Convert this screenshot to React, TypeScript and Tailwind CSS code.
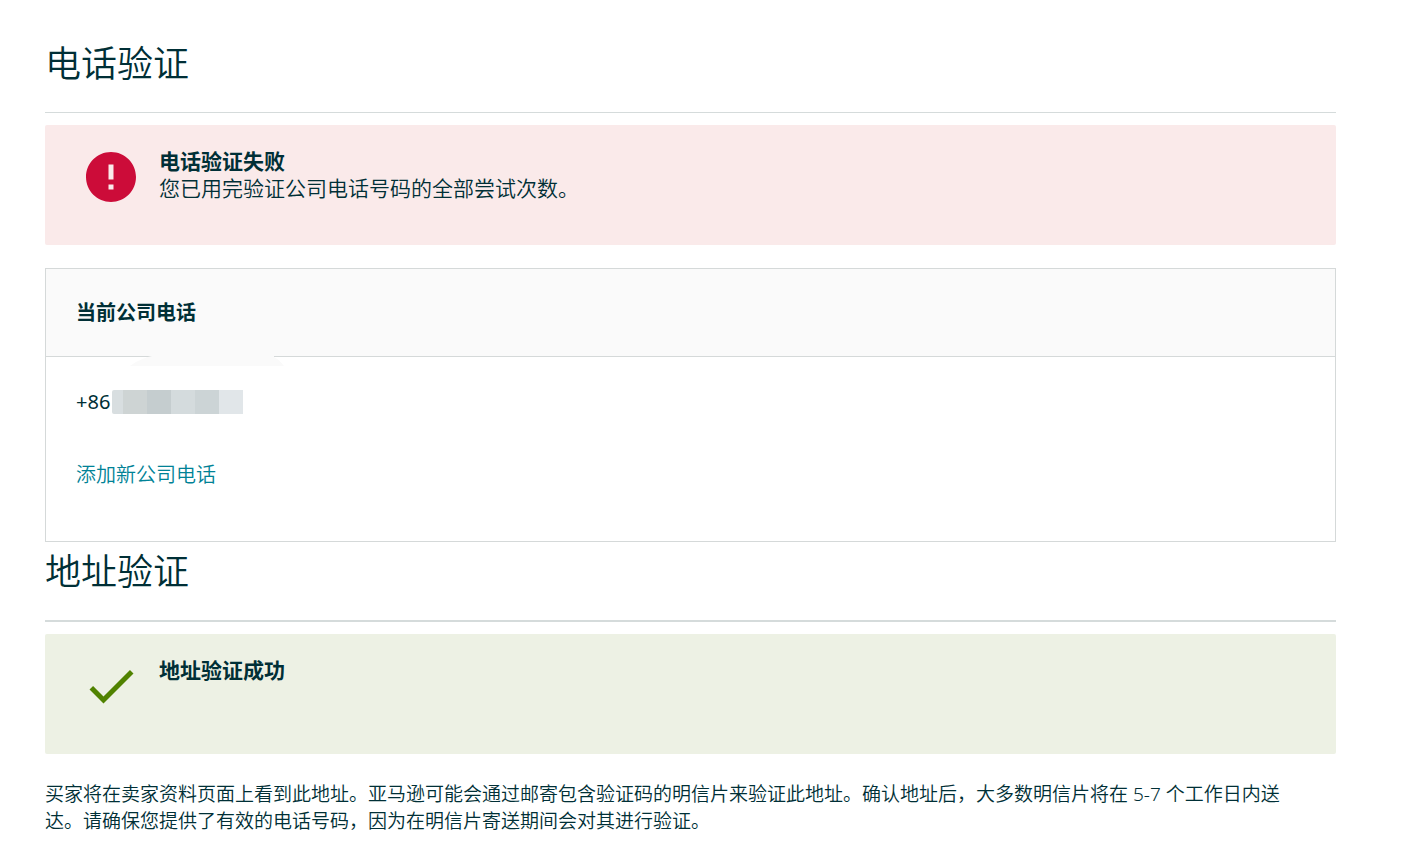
import type { ReactNode } from "react";

function SectionHeading({ children, ruleClass }: { children: ReactNode; ruleClass: string }) {
  return (
    <h1 className={`border-[#d5dbdb] pb-6 text-4xl leading-12 font-[350] ${ruleClass}`}>
      {children}
    </h1>
  );
}

function Banner({
  toneClass,
  icon,
  title,
  children,
}: {
  toneClass: string;
  icon: ReactNode;
  title: string;
  children?: ReactNode;
}) {
  return (
    <div className={`mt-3 flex min-h-30 gap-[23px] rounded-xs pt-[23px] pr-6 pb-6 pl-[41px] text-[21px] leading-[27px] ${toneClass}`}>
      <div className="shrink-0 pt-1">{icon}</div>
      <div>
        <h2 className="font-bold">{title}</h2>
        {children}
      </div>
    </div>
  );
}

function ErrorIcon() {
  return (
    <svg className="size-[50px] fill-[#cc0c39]" viewBox="2 2 20 20" aria-hidden="true">
      <path d="M12 2C6.48 2 2 6.48 2 12s4.48 10 10 10 10-4.48 10-10S17.52 2 12 2zm1 15h-2v-2h2v2zm0-4h-2V7h2v6z" />
    </svg>
  );
}

function CheckIcon() {
  return (
    <svg className="size-[50px] fill-[#508200]" viewBox="2 2 20 20" aria-hidden="true">
      <path d="M9 16.17L4.83 12l-1.42 1.41L9 19 21 7l-1.41-1.41z" />
    </svg>
  );
}

function MaskedDigits() {
  return (
    <span className="flex h-6 overflow-hidden rounded-l-xs" aria-hidden="true">
      <span className="w-[11px] bg-[#d8dee0]" />
      <span className="w-6 bg-[#ced4d4]" />
      <span className="w-6 bg-[#c5cdcf]" />
      <span className="w-6 bg-[#d4dbdd]" />
      <span className="w-6 bg-[#ccd4d6]" />
      <span className="w-6 bg-[#e1e6e9]" />
    </span>
  );
}

export default function App() {
  return (
    <main className="bg-white pt-10 pr-[69px] pb-6 pl-[45px] font-['Noto_Sans','Noto_Sans_CJK_SC',sans-serif] text-[#002f36]" lang="zh-CN">
      <section>
        <SectionHeading ruleClass="border-b">电话验证</SectionHeading>
        <Banner toneClass="bg-[#faeaea]" icon={<ErrorIcon />} title="电话验证失败">
          <p className="font-[350]">您已用完验证公司电话号码的全部尝试次数。</p>
        </Banner>

        <div className="mt-[23px] border border-[#d5d9d9] text-xl leading-[27px]">
          <div className="border-b border-[#d5d9d9] bg-[#fafafa] px-[30px] py-[30px]">
            <h2 className="font-bold">当前公司电话</h2>
          </div>
          <div className="relative px-[30px] pt-[31px] pb-[53px]">
            <svg className="absolute -top-px left-[84px] h-[11px] w-[154px] fill-[#fafafa]" viewBox="0 0 154 11" aria-hidden="true">
              <path d="M0 10C7 5 13 2 22 0H144V1C148 3 151 6 154 10Z" />
            </svg>
            <div className="flex items-center gap-0.5">
              <span>+86</span>
              <MaskedDigits />
            </div>
            <a className="mt-[46px] block w-fit font-[350] text-[#008296]" href="#add-phone">
              添加新公司电话
            </a>
          </div>
        </div>
      </section>

      <section className="pt-1.5">
        <SectionHeading ruleClass="border-b-2">地址验证</SectionHeading>
        <Banner toneClass="bg-[#edf1e4]" icon={<CheckIcon />} title="地址验证成功" />
        <p className="mt-[27px] pr-10 text-[19px] leading-[27px] font-[350]">
          买家将在卖家资料页面上看到此地址。亚马逊可能会通过邮寄包含验证码的明信片来验证此地址。确认地址后，大多数明信片将在 5-7 个工作日内送达。请确保您提供了有效的电话号码，因为在明信片寄送期间会对其进行验证。
        </p>
      </section>
    </main>
  );
}
